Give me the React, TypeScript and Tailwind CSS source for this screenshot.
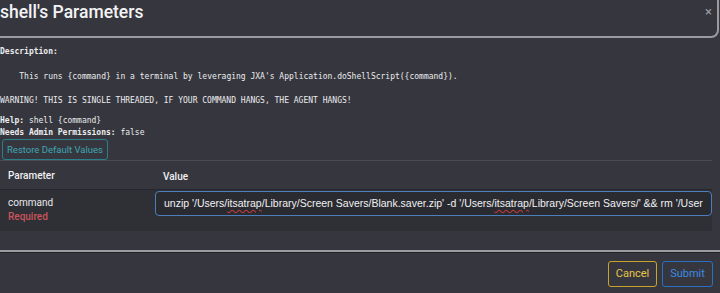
import React from "react";

const mono = { fontFamily: '"DejaVu Sans Mono", "Liberation Mono", monospace' };
const sans = { fontFamily: 'Roboto, "Liberation Sans", Arial, sans-serif' };

export default function App() {
  return (
    <div
      className="w-[720px] h-[293px] overflow-hidden bg-[#36373e] text-[#e6e6e8] relative"
      style={sans}
    >
      {/* header */}
      <div className="w-[719px] h-[38px] border-b-2 border-r-2 border-[#9a9b9f] rounded-br-[8px]">
        <h2 className="text-[17.5px] leading-[24px] font-medium text-[#f3f3f5]">
          shell's Parameters
        </h2>
      </div>
      <button className="absolute right-[8px] top-[5px] text-[13px] leading-none text-[#9c9da2]">
        ×
      </button>

      {/* description */}
      <div className="text-[8px] leading-[12px] text-[#ececee] whitespace-pre" style={mono}>
        <div className="mt-[8px] font-bold">Description:</div>
        <div className="mt-[13px]">    This runs {"{command}"} in a terminal by leveraging JXA's Application.doShellScript({"{command}"}).</div>
        <div className="mt-[12px]">WARNING! THIS IS SINGLE THREADED, IF YOUR COMMAND HANGS, THE AGENT HANGS!</div>
        <div className="mt-[8px]">
          <span className="font-bold">Help:</span> shell {"{command}"}
        </div>
        <div>
          <span className="font-bold">Needs Admin Permissions:</span> false
        </div>
      </div>
      <div className="flex pl-[2px]">
        <button className="h-[21px] px-[4px] border border-[#2b7f8a] rounded-[3px] text-[9.5px] text-[#3ea6b5] leading-none">
          Restore Default Values
        </button>
      </div>

      {/* parameters table */}
      <div className="w-[712px] border-t border-[#4a4b52]">
        <div className="flex h-[29px] items-center border-b border-[#27282d] text-[10px] font-medium text-[#f0f0f2]">
          <div className="w-[155px] shrink-0 pl-[8px]">Parameter</div>
          <div className="pl-[8px] pt-[2px]">Value</div>
        </div>
        <div className="flex h-[41px] bg-[#2f3036]">
          <div className="w-[155px] shrink-0 pl-[8px] pt-[6px] text-[10px] leading-[14px]">
            <div className="text-[#e8e8ea]">command</div>
            <div className="text-[#c9545a] font-medium">Required</div>
          </div>
          <div className="flex-1 min-w-0 pt-[1px]">
            <div
              className="h-[25px] flex items-center px-[8px] border border-[#4d7fbd] rounded-[4px] bg-[#2a2b30] text-[10.5px] text-[#f1f1f3] whitespace-pre overflow-hidden"
              style={{ fontFamily: '"Liberation Sans", Arial, sans-serif' }}
            >
              <span>unzip '/Users/</span>
              <span className="underline decoration-wavy decoration-[#c23a3a] underline-offset-2">itsatrap</span>
              <span>/Library/Screen Savers/Blank.saver.zip' -d '/Users/</span>
              <span className="underline decoration-wavy decoration-[#c23a3a] underline-offset-2">itsatrap</span>
              <span>/Library/Screen Savers/' &amp;&amp; rm '/User</span>
            </div>
          </div>
        </div>
      </div>

      {/* footer */}
      <div className="mt-[19px] border-t-2 border-[#9a9b9f]">
        <div className="border-t border-[#222328] flex justify-end gap-[5px] pr-[7px] pt-[8px]">
          <button className="h-[26px] w-[49px] border border-[#c9a42c] rounded-[3px] text-[11px] text-[#e8c34a]">
            Cancel
          </button>
          <button className="h-[26px] w-[51px] border border-[#2a6fc0] rounded-[3px] text-[11px] text-[#3b8ae0]">
            Submit
          </button>
        </div>
      </div>
    </div>
  );
}
